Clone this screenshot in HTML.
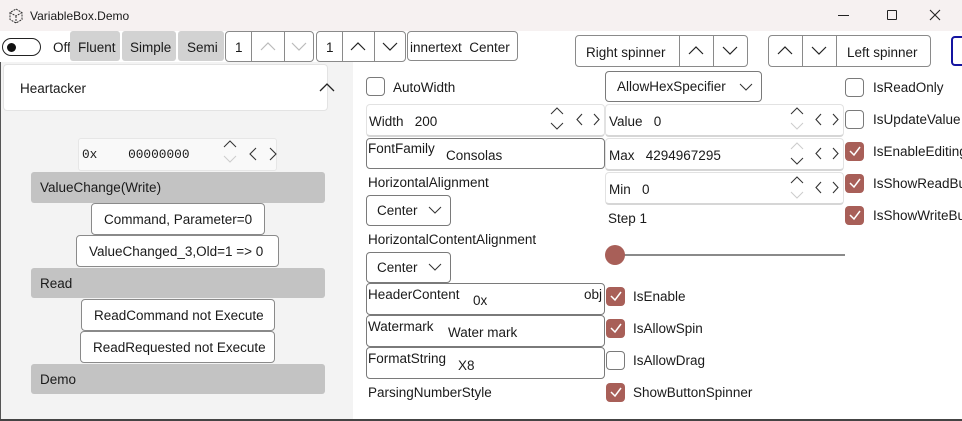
<!DOCTYPE html>
<html><head><meta charset="utf-8"><style>
*{box-sizing:border-box;margin:0;padding:0}
body{width:962px;height:421px;overflow:hidden;background:#fff;font-family:"Liberation Sans",sans-serif;font-size:13.5px;color:#1a1a1a;position:relative}
.a{position:absolute}
.t{position:absolute;white-space:nowrap;line-height:16px;margin-top:1px}
.btn{position:absolute;border:1px solid #8a8a8a;border-radius:4px;background:#fff}
.gb{position:absolute;background:#d2d2d2;border-radius:3px}
.bar{position:absolute;background:#c3c3c3;border-radius:3px}
.box{position:absolute;border:1px solid #e2e2e2;border-bottom:2px solid #d6d6d6;border-radius:4px;background:#fff}
.dbox{position:absolute;border:1px solid #7a7a7a;border-radius:4px;background:#fff}
.cb{position:absolute;width:19px;height:19px;border:1px solid #7a7a7a;border-radius:4px;background:#fff}
.ck{position:absolute;width:19px;height:19px;border-radius:4px;background:#a85f58}
.vl{position:absolute;width:1px;background:#8a8a8a}
svg{position:absolute;overflow:visible}
</style></head><body>
<div class="a" style="left:0;top:0;width:962px;height:31px;background:#f6f1f1"></div>
<svg style="left:8px;top:8px" width="16" height="16"><path d="M8 1L14 4.5V11.5L8 15L2 11.5V4.5Z M2 4.5L8 8L14 4.5 M8 8V15" fill="none" stroke="#333" stroke-width="1" stroke-dasharray="2 1"/></svg>
<div class="t" style="left:30px;top:7px;font-size:12px">VariableBox.Demo</div>
<div class="a" style="left:838px;top:15px;width:11px;height:1px;background:#222"></div>
<div class="a" style="left:887px;top:10px;width:10px;height:10px;border:1px solid #222;border-radius:1px"></div>
<svg style="left:930px;top:10px" width="11" height="11"><path d="M0 0L10 10M10 0L0 10" stroke="#222" stroke-width="1.1"/></svg>
<div class="a" style="left:0;top:31px;width:962px;height:31px;background:#fff"></div>
<div class="a" style="left:2px;top:38px;width:39px;height:18px;border:1px solid #222;border-radius:9px"></div>
<div class="a" style="left:7px;top:43px;width:9px;height:9px;border-radius:50%;background:#111"></div>
<div class="t" style="left:53px;top:39px">Off</div>
<div class="gb" style="left:70px;top:31px;width:50px;height:30px"></div><div class="t" style="left:78px;top:39px">Fluent</div>
<div class="gb" style="left:122px;top:31px;width:54px;height:30px"></div><div class="t" style="left:130px;top:39px">Simple</div>
<div class="gb" style="left:178px;top:31px;width:46px;height:30px"></div><div class="t" style="left:187px;top:39px">Semi</div>
<div class="btn" style="left:225px;top:31px;width:89px;height:31px"></div>
<div class="vl" style="left:251px;top:31px;height:31px"></div><div class="vl" style="left:284px;top:31px;height:31px"></div>
<div class="t" style="left:235px;top:39px">1</div>
<svg style="left:261px;top:43px" width="14" height="8"><path d="M0 7L7 0L14 7" fill="none" stroke="#bbb" stroke-width="1.2"/></svg>
<svg style="left:292px;top:43px" width="14" height="8"><path d="M0 0L7 7L14 0" fill="none" stroke="#bbb" stroke-width="1.2"/></svg>
<div class="btn" style="left:316px;top:31px;width:90px;height:31px"></div>
<div class="vl" style="left:342px;top:31px;height:31px"></div><div class="vl" style="left:374px;top:31px;height:31px"></div>
<div class="t" style="left:326px;top:39px">1</div>
<svg style="left:351px;top:43px" width="14" height="8"><path d="M0 7L7 0L14 7" fill="none" stroke="#222" stroke-width="1.2"/></svg>
<svg style="left:383px;top:43px" width="14" height="8"><path d="M0 0L7 7L14 0" fill="none" stroke="#222" stroke-width="1.2"/></svg>
<div class="btn" style="left:407px;top:31px;width:111px;height:30px"></div>
<div class="t" style="left:410px;top:39px">innertext&nbsp;&nbsp;Center</div>
<div class="btn" style="left:575px;top:35px;width:173px;height:32px"></div>
<div class="vl" style="left:679px;top:35px;height:32px"></div><div class="vl" style="left:713px;top:35px;height:32px"></div>
<div class="t" style="left:586px;top:44px">Right spinner</div>
<svg style="left:689px;top:47px" width="14" height="8"><path d="M0 7L7 0L14 7" fill="none" stroke="#222" stroke-width="1.2"/></svg>
<svg style="left:723px;top:47px" width="14" height="8"><path d="M0 0L7 7L14 0" fill="none" stroke="#222" stroke-width="1.2"/></svg>
<div class="btn" style="left:768px;top:35px;width:163px;height:32px"></div>
<div class="vl" style="left:802px;top:35px;height:32px"></div><div class="vl" style="left:836px;top:35px;height:32px"></div>
<svg style="left:778px;top:47px" width="14" height="8"><path d="M0 7L7 0L14 7" fill="none" stroke="#222" stroke-width="1.2"/></svg>
<svg style="left:812px;top:47px" width="14" height="8"><path d="M0 0L7 7L14 0" fill="none" stroke="#222" stroke-width="1.2"/></svg>
<div class="t" style="left:847px;top:44px">Left spinner</div>
<div class="a" style="left:951px;top:36px;width:20px;height:30px;border:2px solid #1414a0;border-radius:4px"></div>
<div class="a" style="left:0;top:62px;width:353px;height:359px;background:#f3f3f3;border-left:1px solid #555;border-bottom:2px solid #444"></div>
<div class="a" style="left:3px;top:64px;width:325px;height:47px;background:#fff;border:1px solid #e3e3e3;border-radius:4px"></div>
<div class="t" style="left:20px;top:80px">Heartacker</div>
<svg style="left:320px;top:84px" width="14" height="8"><path d="M0 7L7 0L14 7" fill="none" stroke="#222" stroke-width="1.3"/></svg>
<div class="a" style="left:78px;top:138px;width:199px;height:33px;background:#f9f9f9;border:1px solid #e6e6e6;border-radius:3px"></div>
<div class="t" style="left:82px;top:146px;font-family:'Liberation Mono',monospace;font-size:12.8px">0x&nbsp;&nbsp;&nbsp;&nbsp;00000000</div>
<svg style="left:224px;top:141px" width="12" height="22"><path d="M0 6L6 0L12 6" fill="none" stroke="#333" stroke-width="1"/><path d="M0 15L6 21L12 15" fill="none" stroke="#ccc" stroke-width="1"/></svg>
<svg style="left:250px;top:148px" width="26" height="12"><path d="M6 0L0 6L6 12M20 0L26 6L20 12" fill="none" stroke="#333" stroke-width="1.1"/></svg>
<div class="bar" style="left:31px;top:172px;width:294px;height:31px"></div><div class="t" style="left:40px;top:179px">ValueChange(Write)</div>
<div class="btn" style="left:91px;top:203px;width:174px;height:32px"></div><div class="t" style="left:104px;top:211px">Command, Parameter=0</div>
<div class="btn" style="left:76px;top:235px;width:203px;height:32px"></div><div class="t" style="left:89px;top:243px">ValueChanged_3,Old=1 =&gt; 0</div>
<div class="bar" style="left:31px;top:268px;width:294px;height:30px"></div><div class="t" style="left:40px;top:275px">Read</div>
<div class="btn" style="left:81px;top:299px;width:194px;height:32px"></div><div class="t" style="left:94px;top:307px">ReadCommand not Execute</div>
<div class="btn" style="left:80px;top:331px;width:195px;height:32px"></div><div class="t" style="left:93px;top:339px">ReadRequested not Execute</div>
<div class="bar" style="left:31px;top:364px;width:294px;height:30px"></div><div class="t" style="left:40px;top:371px">Demo</div>
<div class="cb" style="left:366px;top:77px"></div><div class="t" style="left:393px;top:79px">AutoWidth</div>
<div class="box" style="left:366px;top:104px;width:239px;height:33px"></div>
<div class="t" style="left:369px;top:113px">Width&nbsp;&nbsp;&nbsp;200</div>
<svg style="left:551px;top:108px" width="12" height="22"><path d="M0 6L6 0L12 6M0 15L6 21L12 15" fill="none" stroke="#333" stroke-width="1"/></svg>
<svg style="left:577px;top:114px" width="22" height="11"><path d="M5 0L0 5.5L5 11M17 0L22 5.5L17 11" fill="none" stroke="#333" stroke-width="1.1"/></svg>
<div class="dbox" style="left:366px;top:138px;width:239px;height:31px"></div>
<div class="t" style="left:368px;top:140px">FontFamily</div><div class="t" style="left:446px;top:147px">Consolas</div>
<div class="t" style="left:368px;top:174px">HorizontalAlignment</div>
<div class="dbox" style="left:366px;top:195px;width:85px;height:31px"></div>
<div class="t" style="left:377px;top:202px">Center</div>
<svg style="left:429px;top:207px" width="12" height="6"><path d="M0 0L6 6L12 0" fill="none" stroke="#333" stroke-width="1"/></svg>
<div class="t" style="left:368px;top:231px">HorizontalContentAlignment</div>
<div class="dbox" style="left:366px;top:252px;width:85px;height:31px"></div>
<div class="t" style="left:377px;top:259px">Center</div>
<svg style="left:429px;top:264px" width="12" height="6"><path d="M0 0L6 6L12 0" fill="none" stroke="#333" stroke-width="1"/></svg>
<div class="dbox" style="left:366px;top:283px;width:239px;height:32px"></div>
<div class="t" style="left:368px;top:286px">HeaderContent</div><div class="t" style="left:473px;top:292px">0x</div><div class="t" style="left:584px;top:286px">obj</div>
<div class="dbox" style="left:366px;top:315px;width:239px;height:32px"></div>
<div class="t" style="left:368px;top:318px">Watermark</div><div class="t" style="left:448px;top:324px">Water mark</div>
<div class="dbox" style="left:366px;top:347px;width:239px;height:32px"></div>
<div class="t" style="left:368px;top:350px">FormatString</div><div class="t" style="left:458px;top:357px">X8</div>
<div class="t" style="left:368px;top:384px">ParsingNumberStyle</div>
<div class="dbox" style="left:605px;top:71px;width:157px;height:31px"></div>
<div class="t" style="left:617px;top:78px">AllowHexSpecifier</div>
<svg style="left:740px;top:84px" width="12" height="6"><path d="M0 0L6 6L12 0" fill="none" stroke="#333" stroke-width="1"/></svg>
<div class="box" style="left:605px;top:104px;width:239px;height:33px"></div>
<div class="t" style="left:609px;top:113px">Value&nbsp;&nbsp;&nbsp;0</div>
<svg style="left:791px;top:108px" width="12" height="22"><path d="M0 6L6 0L12 6" fill="none" stroke="#333" stroke-width="1"/><path d="M0 15L6 21L12 15" fill="none" stroke="#ccc" stroke-width="1"/></svg>
<svg style="left:816px;top:114px" width="22" height="11"><path d="M5 0L0 5.5L5 11M17 0L22 5.5L17 11" fill="none" stroke="#333" stroke-width="1.1"/></svg>
<div class="box" style="left:605px;top:138px;width:239px;height:33px"></div>
<div class="t" style="left:609px;top:147px">Max&nbsp;&nbsp;&nbsp;4294967295</div>
<svg style="left:791px;top:143px" width="12" height="22"><path d="M0 6L6 0L12 6" fill="none" stroke="#ccc" stroke-width="1"/><path d="M0 15L6 21L12 15" fill="none" stroke="#333" stroke-width="1"/></svg>
<svg style="left:816px;top:148px" width="22" height="11"><path d="M5 0L0 5.5L5 11M17 0L22 5.5L17 11" fill="none" stroke="#333" stroke-width="1.1"/></svg>
<div class="box" style="left:605px;top:172px;width:239px;height:33px"></div>
<div class="t" style="left:609px;top:181px">Min&nbsp;&nbsp;&nbsp;0</div>
<svg style="left:791px;top:177px" width="12" height="22"><path d="M0 6L6 0L12 6" fill="none" stroke="#333" stroke-width="1"/><path d="M0 15L6 21L12 15" fill="none" stroke="#ccc" stroke-width="1"/></svg>
<svg style="left:816px;top:182px" width="22" height="11"><path d="M5 0L0 5.5L5 11M17 0L22 5.5L17 11" fill="none" stroke="#333" stroke-width="1.1"/></svg>
<div class="t" style="left:608px;top:210px">Step 1</div>
<div class="a" style="left:620px;top:254px;width:225px;height:2px;background:#8a8a8a"></div>
<div class="a" style="left:605px;top:245px;width:20px;height:20px;border-radius:50%;background:#a85f58"></div>
<div class="ck" style="left:606px;top:287px"></div><div class="t" style="left:633px;top:288px">IsEnable</div>
<div class="ck" style="left:606px;top:319px"></div><div class="t" style="left:633px;top:320px">IsAllowSpin</div>
<div class="cb" style="left:606px;top:351px"></div><div class="t" style="left:633px;top:352px">IsAllowDrag</div>
<div class="ck" style="left:606px;top:383px"></div><div class="t" style="left:633px;top:384px">ShowButtonSpinner</div>
<div class="cb" style="left:845px;top:78px"></div><div class="t" style="left:873px;top:79px">IsReadOnly</div>
<div class="cb" style="left:845px;top:110px"></div><div class="t" style="left:873px;top:111px">IsUpdateValue</div>
<div class="ck" style="left:845px;top:142px"></div><div class="t" style="left:873px;top:143px">IsEnableEditing</div>
<div class="ck" style="left:845px;top:174px"></div><div class="t" style="left:873px;top:175px">IsShowReadButton</div>
<div class="ck" style="left:845px;top:206px"></div><div class="t" style="left:873px;top:207px">IsShowWriteButton</div>
<svg style="left:0;top:0" width="962" height="421">
<g fill="none" stroke="#fff" stroke-width="1.5">
<path d="M611 296L615 300L621 292"/><path d="M611 328L615 332L621 324"/><path d="M611 392L615 396L621 388"/>
<path d="M850 151L854 155L860 147"/><path d="M850 183L854 187L860 179"/><path d="M850 215L854 219L860 211"/>
</g></svg>
<div class="a" style="left:0;top:419px;width:962px;height:2px;background:#444"></div>
</body></html>
